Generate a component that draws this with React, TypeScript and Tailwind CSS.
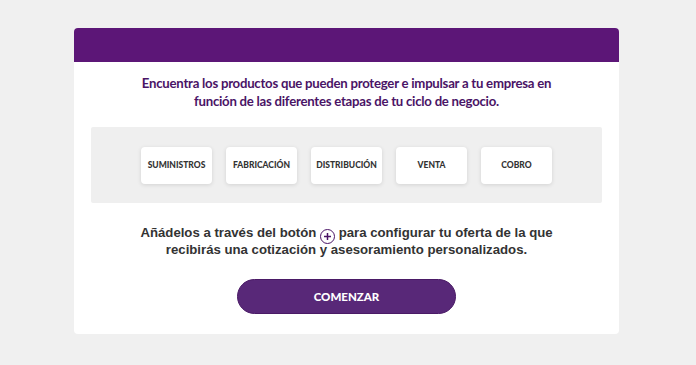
export default function App() {
  const stages = ["SUMINISTROS", "FABRICACIÓN", "DISTRIBUCIÓN", "VENTA", "COBRO"];

  return (
    <div className="min-h-[365px] w-full bg-[#f0f0f0] pt-[28px]">
      <div className="ml-[74px] w-[545px] overflow-hidden rounded-[4px] bg-white pb-[20px]">
        <div className="h-[34px] bg-[#5c1677]" />
        <p className="mt-[12px] text-center font-['Lato',sans-serif] text-[13.2px] font-bold leading-[18px] tracking-[-0.25px] text-[#4a1466]">
          Encuentra los productos que pueden proteger e impulsar a tu empresa en
          <br />
          función de las diferentes etapas de tu ciclo de negocio.
        </p>
        <div className="mx-[17px] mt-[17px] flex h-[76px] items-center justify-center gap-[14px] rounded-[2px] bg-[#efefef]">
          {stages.map((stage) => (
            <div
              key={stage}
              className="flex h-[37px] w-[71px] items-center justify-center rounded-[4px] bg-white font-['Lato',sans-serif] text-[8.5px] font-black text-[#333] shadow-[0_1px_4px_rgba(0,0,0,0.12)]"
            >
              {stage}
            </div>
          ))}
        </div>
        <p className="mt-[21px] text-center font-['Liberation_Sans',Arial,sans-serif] text-[13.2px] font-bold leading-[17px] text-[#333]">
          Añádelos a través del botón{" "}
          <span className="relative top-[4px] inline-flex h-[15px] w-[15px] items-center justify-center rounded-full border-[1.5px] border-[#4a1466] align-baseline">
            <svg width="9" height="9" viewBox="0 0 9 9">
              <path d="M4.5 1v7M1 4.5h7" stroke="#4a1466" strokeWidth="1.5" />
            </svg>
          </span>{" "}
          para configurar tu oferta de la que
          <br />
          recibirás una cotización y asesoramiento personalizados.
        </p>
        <div className="mt-[21px] flex justify-center">
          <button className="h-[35px] w-[219px] rounded-full border border-[#4a1a66] bg-[#582878] font-['Lato',sans-serif] text-[11.5px] font-black text-white">
            COMENZAR
          </button>
        </div>
      </div>
    </div>
  );
}
